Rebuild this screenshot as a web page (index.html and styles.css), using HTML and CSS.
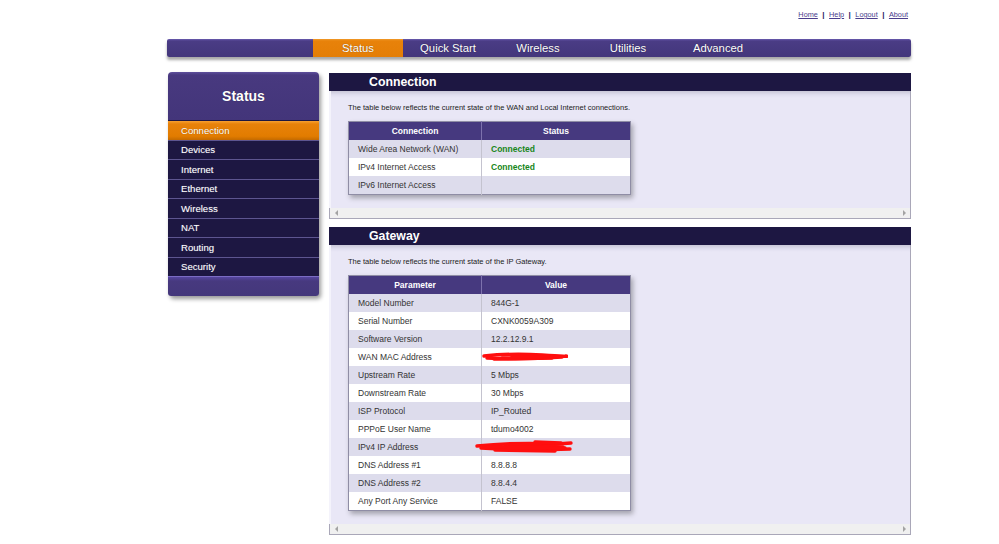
FILE: index.html
```html
<!DOCTYPE html>
<html>
<head>
<meta charset="utf-8">
<title>Status</title>
<link rel="stylesheet" href="styles.css">
</head>
<body>
<div class="page">
  <div class="toplinks">
    <a href="#">Home</a><span class="sep">|</span><a href="#">Help</a><span class="sep">|</span><a href="#">Logout</a><span class="sep">|</span><a href="#">About</a>
  </div>
  <nav class="topnav">
    <a class="tab active" href="#">Status</a>
    <a class="tab" href="#">Quick Start</a>
    <a class="tab" href="#">Wireless</a>
    <a class="tab" href="#">Utilities</a>
    <a class="tab" href="#">Advanced</a>
  </nav>
  <div class="main">
    <aside class="sidebar">
      <div class="side-head">Status</div>
      <a class="side-item active" href="#">Connection</a>
      <a class="side-item" href="#">Devices</a>
      <a class="side-item" href="#">Internet</a>
      <a class="side-item" href="#">Ethernet</a>
      <a class="side-item" href="#">Wireless</a>
      <a class="side-item" href="#">NAT</a>
      <a class="side-item" href="#">Routing</a>
      <a class="side-item" href="#">Security</a>
      <div class="side-foot"></div>
    </aside>
    <div class="content">
      <section class="panel">
        <h2 class="panel-title">Connection</h2>
        <div class="panel-body">
          <p class="desc">The table below reflects the current state of the WAN and Local Internet connections.</p>
          <table class="grid">
            <tr><th class="c1">Connection</th><th>Status</th></tr>
            <tr><td class="c1">Wide Area Network (WAN)</td><td class="ok">Connected</td></tr>
            <tr><td class="c1">IPv4 Internet Access</td><td class="ok">Connected</td></tr>
            <tr><td class="c1">IPv6 Internet Access</td><td></td></tr>
          </table>
        </div>
        <div class="hscroll"><span class="arr arr-l"></span><span class="arr arr-r"></span></div>
      </section>
      <section class="panel">
        <h2 class="panel-title">Gateway</h2>
        <div class="panel-body">
          <p class="desc">The table below reflects the current state of the IP Gateway.</p>
          <table class="grid">
            <tr><th class="c1">Parameter</th><th>Value</th></tr>
            <tr><td class="c1">Model Number</td><td>844G-1</td></tr>
            <tr><td class="c1">Serial Number</td><td>CXNK0059A309</td></tr>
            <tr><td class="c1">Software Version</td><td>12.2.12.9.1</td></tr>
            <tr><td class="c1">WAN MAC Address</td><td class="redact"><svg class="scribble s1" width="86" height="12" viewBox="0 0 86 12"><path d="M2 5 Q 30 2 60 4 T 84 5" /><path d="M5 7 Q 40 9 80 6" /><path d="M12 8 L 70 7" /><path d="M20 4 L 66 5" /><path d="M30 6 L 60 6" /></svg></td></tr>
            <tr><td class="c1">Upstream Rate</td><td>5 Mbps</td></tr>
            <tr><td class="c1">Downstream Rate</td><td>30 Mbps</td></tr>
            <tr><td class="c1">ISP Protocol</td><td>IP_Routed</td></tr>
            <tr><td class="c1">PPPoE User Name</td><td>tdumo4002</td></tr>
            <tr><td class="c1">IPv4 IP Address</td><td class="redact"><svg class="scribble s2" width="100" height="16" viewBox="0 0 100 16"><path d="M2 7 Q 40 3 82 5 L 96 4" /><path d="M6 9 Q 50 12 95 10" /><path d="M20 11 L 80 12" /><path d="M30 6 L 88 8" /><path d="M60 3 L 86 4" /><path d="M14 8 L 90 9" /></svg></td></tr>
            <tr><td class="c1">DNS Address #1</td><td>8.8.8.8</td></tr>
            <tr><td class="c1">DNS Address #2</td><td>8.8.4.4</td></tr>
            <tr><td class="c1">Any Port Any Service</td><td>FALSE</td></tr>
          </table>
        </div>
        <div class="hscroll"><span class="arr arr-l"></span><span class="arr arr-r"></span></div>
      </section>
    </div>
  </div>
</div>
</body>
</html>
```
FILE: styles.css
```css
body {
  margin: 0;
  background: #ffffff;
  font-family: "Liberation Sans", Arial, sans-serif;
}

.page {
  width: 744px;
  margin-left: 167px;
}

/* top links */
.toplinks {
  height: 39px;
  box-sizing: border-box;
  padding-top: 11px;
  padding-right: 3px;
  display: flex;
  justify-content: flex-end;
  align-items: flex-start;
  font-size: 7.3px;
  line-height: 8px;
}
.toplinks a {
  color: #4a3d8c;
  text-decoration: underline;
}
.toplinks .sep {
  color: #2c2266;
  font-weight: bold;
  font-size: 8px;
  margin: 0 4.5px;
}

/* top nav */
.topnav {
  height: 18px;
  display: flex;
  padding-left: 146px;
  background: linear-gradient(#6a5bb0 0, #4a3c85 2px, #43367b 100%);
  border-radius: 2px;
  box-shadow: 0 3px 3px rgba(0, 0, 0, 0.35);
}
.tab {
  width: 90px;
  text-align: center;
  color: #ffffff;
  font-size: 11.3px;
  line-height: 18px;
  text-decoration: none;
  text-shadow: 0 0 1px rgba(0, 0, 0, 0.5);
}
.tab.active {
  background: linear-gradient(#f09a2a 0, #e8820a 2px, #e47e06 100%);
}

/* main layout */
.main {
  display: flex;
  align-items: flex-start;
  margin-top: 15px;
}

/* sidebar */
.sidebar {
  width: 151px;
  margin-left: 1px;
  display: flex;
  flex-direction: column;
  border-radius: 4px;
  box-shadow: 2px 3px 4px rgba(0, 0, 0, 0.4);
}
.side-head {
  height: 48px;
  display: flex;
  align-items: center;
  justify-content: center;
  color: #ffffff;
  font-size: 14px;
  font-weight: bold;
  background: linear-gradient(#5e4f9c 0, #48397f 3px, #43357a 100%);
  border-radius: 4px 4px 0 0;
  text-shadow: 0 0 1px rgba(0, 0, 0, 0.5);
}
.side-item {
  height: 19.5px;
  box-sizing: border-box;
  border-top: 1px solid #5d5590;
  background: #1d1742;
  color: #ffffff;
  font-size: 9.6px;
  padding-left: 13px;
  display: flex;
  align-items: center;
  text-decoration: none;
  text-shadow: 0 0 1px rgba(255, 255, 255, 0.35);
}
.side-item.active {
  border-top: 1px solid #1d1742;
  background: linear-gradient(#f7a030 0, #e8820a 3px, #e27c00 80%, #c46a00 100%);
  text-shadow: 0 0 1px rgba(0, 0, 0, 0.3);
}
.side-foot {
  height: 20px;
  box-sizing: border-box;
  border-top: 1px solid #7b6cc4;
  background: linear-gradient(#5646a0 0, #47397f 4px, #44377b 100%);
  border-radius: 0 0 3px 3px;
}

/* content panels */
.content {
  width: 582px;
  margin-left: 10px;
  margin-top: 1px;
  display: flex;
  flex-direction: column;
  gap: 8px;
}
.panel {
  border: 1px solid #a9a7b8;
  border-top: 0;
  background: #e9e7f6;
}
.panel-title {
  margin: 0 -1px;
  height: 18px;
  box-sizing: border-box;
  background: #1d1742;
  color: #ffffff;
  font-size: 12.3px;
  font-weight: bold;
  line-height: 18px;
  padding-left: 40px;
}
.panel-body {
  padding: 12px 0 13px 17px;
  background: linear-gradient(#c9c7d8 0, #e1dff0 4px, #e9e7f6 7px);
  border-left: 2px solid #f4f3fb;
  margin-left: -1px;
}
.desc {
  margin: 0;
  font-size: 7.5px;
  line-height: 10px;
  color: #222222;
}
.grid {
  margin-top: 8px;
  width: 283px;
  border-collapse: collapse;
  border: 1px solid #8f8da5;
  box-shadow: 2px 3px 5px rgba(0, 0, 0, 0.3);
  font-size: 8.5px;
}
.grid th {
  height: 18px;
  padding: 0;
  background: #46397f;
  color: #ffffff;
  font-weight: bold;
  text-align: center;
}
.grid th.c1 {
  border-right: 1px solid #7d72ad;
}
.grid td {
  height: 18px;
  padding: 0 0 0 9px;
  color: #333333;
  text-align: left;
}
.grid td.c1 {
  width: 123px;
  border-right: 1px solid #c4c3cf;
}
.grid tr:nth-child(even) td {
  background: #dddcec;
}
.grid tr:nth-child(odd) td {
  background: #ffffff;
}
.grid td.ok {
  color: #17861a;
  font-weight: bold;
}
.grid td.redact {
  position: relative;
}
.scribble {
  position: absolute;
}
.scribble path {
  fill: none;
  stroke: #ff0f0f;
  stroke-width: 3.4;
  stroke-linecap: round;
}
.scribble.s1 {
  left: 0;
  top: 3px;
}
.scribble.s2 {
  left: -7px;
  top: 1px;
}

/* horizontal scroll strip */
.hscroll {
  height: 10px;
  background: #f0f0f0;
  display: flex;
  justify-content: space-between;
  align-items: center;
  padding: 0 4px 0 5px;
}
.arr {
  width: 0;
  height: 0;
  border-top: 3px solid transparent;
  border-bottom: 3px solid transparent;
}
.arr-l {
  border-right: 3px solid #a3a3a3;
}
.arr-r {
  border-left: 3px solid #a3a3a3;
}
```
